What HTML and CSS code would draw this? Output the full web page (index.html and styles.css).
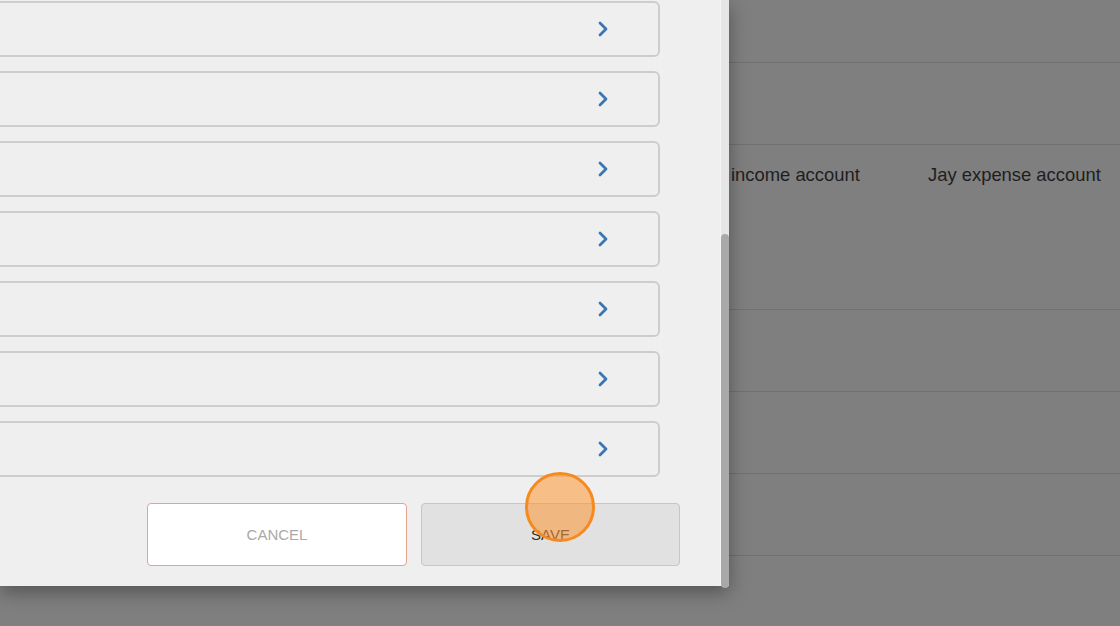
FILE: index.html
```html
<!DOCTYPE html>
<html lang="en">
<head>
    <meta charset="UTF-8">
    <meta name="viewport" content="width=device-width, initial-scale=1.0">
    <title>Edit Accounts</title>
    <link rel="stylesheet" href="styles.css">
</head>
<body>
    <!-- page behind the dialog -->
    <main class="page">
        <div class="page-row row-short"></div>
        <div class="page-row row-mid"></div>
        <div class="page-row row-tall">
            <span></span>
            <span>income account</span>
            <span>Jay expense account</span>
        </div>
        <div class="page-row row-mid"></div>
        <div class="page-row row-mid"></div>
        <div class="page-row row-mid"></div>
        <div class="page-row"></div>
    </main>

    <!-- dialog -->
    <section class="modal">
        <div class="modal-body">
            <ul class="field-list">
                <li class="field"><svg class="chevron" viewBox="0 0 10 16"><path d="M2 2 L8 8 L2 14"/></svg></li>
                <li class="field"><svg class="chevron" viewBox="0 0 10 16"><path d="M2 2 L8 8 L2 14"/></svg></li>
                <li class="field"><svg class="chevron" viewBox="0 0 10 16"><path d="M2 2 L8 8 L2 14"/></svg></li>
                <li class="field"><svg class="chevron" viewBox="0 0 10 16"><path d="M2 2 L8 8 L2 14"/></svg></li>
                <li class="field"><svg class="chevron" viewBox="0 0 10 16"><path d="M2 2 L8 8 L2 14"/></svg></li>
                <li class="field"><svg class="chevron" viewBox="0 0 10 16"><path d="M2 2 L8 8 L2 14"/></svg></li>
                <li class="field"><svg class="chevron" viewBox="0 0 10 16"><path d="M2 2 L8 8 L2 14"/></svg></li>
            </ul>
            <div class="actions">
                <button class="btn btn-cancel" type="button">CANCEL</button>
                <button class="btn btn-save" type="button">SAVE</button>
            </div>
        </div>
        <div class="scrollbar"><div class="thumb"></div></div>
    </section>

    <div class="click-marker"></div>
</body>
</html>
```

FILE: styles.css
```css
* {
    margin: 0;
    padding: 0;
    box-sizing: border-box;
}

body {
    font-family: "Liberation Sans", Arial, sans-serif;
    background-color: #7f7f7f;
    width: 1120px;
    height: 626px;
    overflow: hidden;
}

/* background page */
.page {
    display: flex;
    flex-direction: column;
}

.page-row {
    height: 71px;
    border-bottom: 1px solid #707070;
    display: grid;
    grid-template-columns: 731px 197px 1fr;
    align-items: start;
    color: #1e1e1e;
    font-size: 18.4px;
}

.row-short {
    height: 63px;
}

.row-mid {
    height: 82px;
}

.row-tall {
    height: 165px;
    padding-top: 19px;
}

/* dialog */
.modal {
    position: absolute;
    top: 0;
    left: 0;
    width: 729px;
    height: 586px;
    display: flex;
    box-shadow: 0 6px 18px rgba(0, 0, 0, 0.35);
}

.modal-body {
    width: 720px;
    background-color: #efefef;
    overflow: hidden;
    display: flex;
    flex-direction: column;
}

.field-list {
    list-style: none;
    display: flex;
    flex-direction: column;
    gap: 14px;
    padding-top: 1px;
}

.field {
    margin-left: -12px;
    width: 672px;
    height: 56px;
    border: 2px solid #cdcdcd;
    border-radius: 6px;
    display: flex;
    justify-content: flex-end;
    align-items: center;
    padding-right: 50px;
}

.chevron {
    width: 10px;
    height: 16px;
    fill: none;
    stroke: #3a76b2;
    stroke-width: 2.8;
    stroke-linecap: round;
    stroke-linejoin: round;
}

.actions {
    display: flex;
    justify-content: flex-end;
    gap: 14px;
    margin-top: 26px;
    padding-right: 40px;
}

.btn {
    width: 260px;
    height: 63px;
    border-radius: 4px;
    font-family: "Liberation Sans", Arial, sans-serif;
    font-size: 15px;
    cursor: pointer;
}

.btn-cancel {
    background-color: #ffffff;
    border: 1px solid #e2a48f;
    color: #a9a9a9;
}

.btn-save {
    width: 259px;
    background-color: #e1e1e1;
    border: 1px solid #c6c6c6;
    color: #2e2e2e;
}

.scrollbar {
    width: 9px;
    background-color: #e6e6e6;
    border-left: 1px solid #f4f4f4;
    display: flex;
    flex-direction: column;
}

.thumb {
    margin-top: 234px;
    flex: 1;
    margin-bottom: -2px;
    background-color: #a9a9a9;
    border-radius: 4px;
}

/* click indicator from the recording */
.click-marker {
    position: absolute;
    left: 525px;
    top: 472px;
    width: 70px;
    height: 70px;
    border-radius: 50%;
    border: 3px solid #f58a1f;
    background-color: rgba(255, 150, 50, 0.55);
}
```
